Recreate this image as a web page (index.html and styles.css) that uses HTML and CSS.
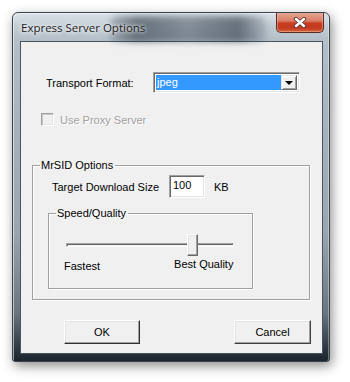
FILE: index.html
```html
<!DOCTYPE html>
<html>
<head>
<meta charset="utf-8">
<link rel="stylesheet" href="styles.css">
</head>
<body>
<div class="window">
  <div class="titlebar">
    <span class="title">Express Server Options</span>
    <span class="glass-mark"></span>
    <button class="close" aria-label="Close">
      <svg width="14" height="11" viewBox="0 0 14 11">
        <path d="M3 2 L11 9 M11 2 L3 9" stroke="#5a3a36" stroke-width="4.2" stroke-linecap="round"/>
        <path d="M3 2 L11 9 M11 2 L3 9" stroke="#ffffff" stroke-width="2.4" stroke-linecap="round"/>
      </svg>
    </button>
  </div>
  <div class="client">
    <div class="row-format">
      <span class="lbl-format">Transport Format:</span>
      <div class="combo">
        <span class="combo-value">jpeg</span>
        <span class="combo-btn"><span class="arrow"></span></span>
      </div>
    </div>
    <div class="row-proxy">
      <span class="checkbox"></span>
      <span class="lbl-disabled">Use Proxy Server</span>
    </div>
    <fieldset class="group group-mrsid">
      <legend>MrSID Options</legend>
      <div class="row-size">
        <span class="lbl-size">Target Download Size</span>
        <span class="edit">100</span>
        <span class="lbl-kb">KB</span>
      </div>
      <fieldset class="group group-speed">
        <legend>Speed/Quality</legend>
        <div class="slider">
          <div class="track"></div>
          <div class="thumb"></div>
        </div>
        <div class="slider-labels">
          <span class="lbl-fast">Fastest</span>
          <span class="lbl-best">Best Quality</span>
        </div>
      </fieldset>
    </fieldset>
    <div class="buttons">
      <button class="btn btn-ok">OK</button>
      <button class="btn btn-cancel">Cancel</button>
    </div>
  </div>
</div>
</body>
</html>
```
FILE: styles.css
```css
* { box-sizing: border-box; }
html, body { margin: 0; padding: 0; }
body {
  background: #ffffff;
  width: 350px;
  height: 382px;
  overflow: hidden;
  font-family: "Liberation Sans", Arial, sans-serif;
  font-size: 11px;
  color: #000;
}
.window {
  margin: 12px 0 0 12px;
  width: 318px;
  height: 350px;
  border: 1px solid #3a444e;
  border-radius: 6px 6px 3px 3px;
  padding: 28px 6px 7px 7px;
  background: linear-gradient(180deg, #dbe2e8 0px, #c2ccd5 14px, #b3bec8 28px, #a7b2bc 110px, #9aa5af 220px, #6a7580 300px, #2f3841 335px, #1c242c 348px);
  box-shadow: 2px 4px 12px rgba(0,0,0,0.45), inset 1px 1px 0 rgba(255,255,255,0.55), inset -1px 0 0 rgba(255,255,255,0.35);
  display: flex;
  flex-direction: column;
  overflow: hidden;
}
.titlebar {
  height: 0;
  display: flex;
  align-items: flex-start;
  position: relative;
}
.title {
  margin-top: -20px;
  margin-left: 1px;
  font-family: "Open Sans", "Noto Sans", sans-serif;
  font-size: 11.5px;
  line-height: 14px;
  color: #1a1a1a;
  text-shadow: 0 0 6px #fff, 0 0 3px #fff;
  white-space: nowrap;
  position: relative;
  z-index: 2;
}
.glass-mark {
  margin-top: -25px;
  margin-left: -36px;
  width: 158px;
  height: 26px;
  border-radius: 8px;
  background: linear-gradient(90deg, rgba(50,62,74,0.2) 0%, rgba(40,52,64,0.6) 18%, rgba(55,67,79,0.45) 50%, rgba(40,52,64,0.6) 82%, rgba(60,72,84,0.15) 100%);
  filter: blur(3px);
  z-index: 1;
}
.close {
  position: absolute;
  right: -1px;
  top: -29px;
  width: 48px;
  height: 21px;
  border: 1px solid #5b2a22;
  border-top: none;
  border-radius: 0 0 5px 5px;
  background: linear-gradient(180deg, #e8ab9b 0%, #d97c64 45%, #c83e22 55%, #c23a20 80%, #d5663d 100%);
  box-shadow: inset 0 0 0 1px rgba(255,200,180,0.45);
  padding: 0;
  display: flex;
  align-items: center;
  justify-content: center;
  z-index: 3;
}
.client {
  flex: 1;
  background: #f0f0f0;
  border: 1px solid #4a5560;
  padding: 30px 0 0 0;
  display: flex;
  flex-direction: column;
  align-items: flex-start;
}
.row-format {
  display: flex;
  align-items: center;
  height: 21px;
}
.lbl-format {
  width: 132px;
  padding-left: 25px;
  white-space: nowrap;
}
.combo {
  width: 147px;
  height: 21px;
  border: 1px solid;
  border-color: #a0a0a0 #ffffff #ffffff #a0a0a0;
  box-shadow: inset 1px 1px 0 #696969, inset -1px -1px 0 #e3e3e3;
  background: #fff;
  padding: 2px;
  display: flex;
}
.combo-value {
  flex: 1;
  background: #3399ff;
  color: #fff;
  line-height: 15px;
  padding-left: 1px;
}
.combo-btn {
  width: 16px;
  height: 15px;
  background: #f0f0f0;
  border: 1px solid;
  border-color: #e3e3e3 #696969 #696969 #e3e3e3;
  box-shadow: inset 1px 1px 0 #fff, inset -1px -1px 0 #a0a0a0;
  display: flex;
  align-items: center;
  justify-content: center;
}
.arrow {
  width: 0; height: 0;
  border-left: 4px solid transparent;
  border-right: 4px solid transparent;
  border-top: 4px solid #000;
  margin-top: 1px;
}
.row-proxy {
  margin-top: 20px;
  margin-left: 20px;
  display: flex;
  align-items: center;
  height: 13px;
}
.checkbox {
  width: 13px;
  height: 13px;
  border: 1px solid;
  border-color: #a0a0a0 #ffffff #ffffff #a0a0a0;
  box-shadow: inset 1px 1px 0 #c8c8c8, inset -1px -1px 0 #e3e3e3;
  background: #f0f0f0;
}
.lbl-disabled {
  margin-left: 6px;
  color: #a0a0a0;
  text-shadow: 1px 1px 0 #fff;
}
.group {
  margin: 0;
  padding: 0;
  min-width: 0;
  border: 1px solid #a0a0a0;
  box-shadow: 1px 1px 0 #fff, inset 1px 1px 0 #fff;
}
.group legend {
  margin-left: 7px;
  padding: 0 2px 0 1px;
  line-height: 13px;
}
.group-mrsid {
  margin-top: 33px;
  margin-left: 11px;
  width: 278px;
  padding: 0 0 10px 0;
}
.row-size {
  margin-top: 3px;
  display: flex;
  align-items: center;
  height: 23px;
}
.lbl-size {
  width: 136px;
  padding-left: 19px;
  white-space: nowrap;
}
.edit {
  width: 36px;
  height: 23px;
  border: 1px solid;
  border-color: #a0a0a0 #ffffff #ffffff #a0a0a0;
  box-shadow: inset 1px 1px 0 #696969, inset -1px -1px 0 #e3e3e3;
  background: #fff;
  padding: 3px 0 0 3px;
  line-height: 13px;
}
.lbl-kb {
  margin-left: 9px;
}
.group-speed {
  margin-top: 9px;
  margin-left: 15px;
  width: 205px;
  padding: 0 0 14px 0;
}
.slider {
  margin-top: 14px;
  margin-left: 17px;
  width: 168px;
  height: 22px;
  position: relative;
  display: flex;
  align-items: center;
}
.track {
  width: 168px;
  height: 4px;
  border: 1px solid;
  border-color: #a0a0a0 #ffffff #ffffff #a0a0a0;
  box-shadow: inset 1px 1px 0 #696969;
  margin-top: -1px;
}
.thumb {
  position: absolute;
  left: 121px;
  top: 0;
  width: 11px;
  height: 22px;
  background: #f0f0f0;
  border: 1px solid;
  border-color: #ffffff #696969 #696969 #ffffff;
  box-shadow: inset -1px -1px 0 #a0a0a0, inset 1px 1px 0 #e3e3e3;
}
.slider-labels {
  display: flex;
  align-items: flex-start;
  margin-top: 2px;
  height: 16px;
}
.lbl-fast {
  margin-left: 15px;
  margin-top: 2px;
  line-height: 13px;
}
.lbl-best {
  margin-left: 74px;
  line-height: 13px;
}
.buttons {
  margin-top: 20px;
  width: 100%;
  display: flex;
  justify-content: space-between;
  padding: 0 11px 0 43px;
}
.btn {
  font-family: "Liberation Sans", Arial, sans-serif;
  font-size: 11px;
  color: #000;
  height: 24px;
  background: #f0f0f0;
  border: 1px solid;
  border-color: #ffffff #404040 #404040 #ffffff;
  box-shadow: inset -1px -1px 0 #a0a0a0, inset 1px 1px 0 #e3e3e3;
  padding: 0;
}
.btn-ok { width: 76px; border-color: #ffffff #303030 #303030 #ffffff; }
.btn-cancel { width: 77px; }
```
